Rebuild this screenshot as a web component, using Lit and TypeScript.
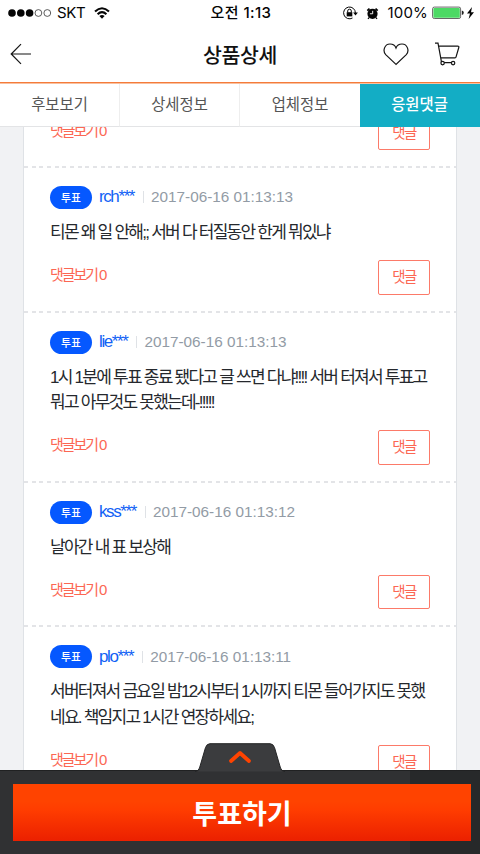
import { LitElement, html, css, svg } from "lit";
import { customElement, property } from "lit/decorators.js";
import { classMap } from "lit/directives/class-map.js";

interface Comment {
  user: string;
  date: string;
  lines: string[];
}

const comments: Comment[] = [
  { user: "rch***", date: "2017-06-16 01:13:13", lines: ["티몬 왜 일 안해;; 서버 다 터질동안 한게 뭐있냐"] },
  {
    user: "lie***",
    date: "2017-06-16 01:13:13",
    lines: ["1시 1분에 투표 종료 됐다고 글 쓰면 다냐!!!! 서버 터져서 투표고", "뭐고 아무것도 못했는데-!!!!!"],
  },
  { user: "kss***", date: "2017-06-16 01:13:12", lines: ["날아간 내 표 보상해"] },
  {
    user: "plo***",
    date: "2017-06-16 01:13:11",
    lines: ["서버터져서 금요일 밤12시부터 1시까지 티몬 들어가지도 못했", "네요. 책임지고 1시간 연장하세요;"],
  },
];

@customElement("status-bar")
class StatusBar extends LitElement {
  static styles = css`
    :host {
      display: grid;
      grid-template-columns: 1fr auto 1fr;
      align-items: center;
      height: 26px;
      padding: 0 6px 0 8px;
      font: 15.5px/26px Inter, "Noto Sans CJK KR", sans-serif;
      color: #050505;
    }
    .side { display: flex; align-items: center; }
    .right { justify-content: flex-end; }
    .carrier { margin: 0 8px 0 5px; font-size: 15px; letter-spacing: -0.3px; }
    .time { font-weight: 500; font-size: 15px; letter-spacing: 0.4px; }
    .pct { margin: 0 4px 0 8px; letter-spacing: 0.2px; font-size: 15px; }
    svg { display: block; flex: none; }
    .alarm { margin-left: 8px; }
    .bolt { margin-left: 3px; }
  `;
  render() {
    return html`
      <div class="side">
        <svg width="44" height="10" viewBox="0 0 44 10">
          ${[4, 12.8, 21.6].map((x) => svg`<circle cx=${x} cy="5" r="3.8" fill="#050505" />`)}
          ${[30.4, 39.3].map((x) => svg`<circle cx=${x} cy="5" r="3.4" fill="none" stroke="#333" stroke-width=".8" />`)}
        </svg>
        <span class="carrier">SKT</span>
        <svg width="16" height="12" viewBox="0 0 16 12">
          <g fill="none" stroke="#050505" stroke-width="2.1">
            <path d="M1 4.5Q8-2 15 4.5" />
            <path d="M3.6 7.3Q8 3.1 12.4 7.3" />
          </g>
          <path d="M5.4 9.1Q8 6.8 10.6 9.1L8 11.8Z" fill="#050505" />
        </svg>
      </div>
      <span class="time">오전 1:13</span>
      <div class="side right">
        <svg width="15" height="14" viewBox="0 0 15 14">
          <path d="M12.4 7A5.9 5.9 0 1 0 9.5 12" fill="none" stroke="#050505" stroke-width="1" />
          <path d="M10.1 6.5h4.8l-2.4 3Z" fill="#050505" />
          <rect x="3.7" y="6.2" width="5.6" height="4.2" fill="#050505" />
          <path d="M4.7 6.5V5a1.8 1.8 0 0 1 3.6 0v1.5" fill="none" stroke="#050505" stroke-width="1" />
        </svg>
        <svg class="alarm" width="13" height="13" viewBox="0 0 14 13">
          <circle cx="7" cy="6.8" r="5.5" fill="#050505" />
          <path d="M1.4 3.4L3.8 1.2M12.6 3.4L10.2 1.2" stroke="#050505" stroke-width="1.9" />
          <path d="M3.2 11l-1 1.4M10.8 11l1 1.4" stroke="#050505" stroke-width="1.4" />
          <path d="M4.2 6.8H7.2V3.6" fill="none" stroke="#fff" stroke-width="1" />
        </svg>
        <span class="pct">100%</span>
        <svg width="32" height="14" viewBox="0 0 32 14">
          <rect x=".6" y="1.1" width="28" height="11.4" rx="1.7" fill="#fff" stroke="#555" stroke-width=".9" />
          <rect x="1.4" y="1.9" width="26.4" height="9.8" rx=".8" fill="#4cd964" />
          <path d="M29.8 4.6q2 .3 2 2.2t-2 2.2Z" fill="#222" />
        </svg>
        <svg class="bolt" width="7" height="12" viewBox="0 0 7 12">
          <path d="M5 0L0 6.6H3L1.6 12L7 5.2H4Z" fill="#050505" />
        </svg>
      </div>
    `;
  }
}

@customElement("title-bar")
class TitleBar extends LitElement {
  static styles = css`
    :host {
      display: grid;
      grid-template-columns: 1fr auto 1fr;
      align-items: center;
      height: 56px;
      padding: 0 20px 0 10px;
      border-bottom: 1px solid #f47b3a;
      box-shadow: 0 1px 0 #f9c09f;
      position: relative;
    }
    h1 {
      margin: 0 0 0 10px;
      font: 500 20.5px/30px "Noto Sans CJK KR", sans-serif;
      letter-spacing: -0.4px;
      color: #111;
    }
    .actions { display: flex; justify-content: flex-end; gap: 26px; align-items: center; }
    svg { display: block; fill: none; stroke: #151515; stroke-width: 1.2; }
  `;
  render() {
    return html`
      <svg width="22" height="22" viewBox="0 0 22 22">
        <path d="M21 11H1.2M11 1.2L1.2 11L11 20.8" />
      </svg>
      <h1>상품상세</h1>
      <div class="actions">
        <svg width="26" height="24" viewBox="0 0 26 24">
          <path d="M13 22.4L2.7 12.6C-.7 8.8 1.6 2 7 2C10 2 12.2 3.7 13 6C13.8 3.7 16 2 19 2C24.4 2 26.7 8.8 23.3 12.6Z" />
        </svg>
        <svg width="25" height="24" viewBox="0 0 25 24">
          <path d="M0 1.1H3L6.6 20.6H18M3.7 4.1H22.6Q24.2 4.1 23.8 5.5L21 15.1Q20.8 15.8 20 15.8H5.8" />
          <circle cx="7.6" cy="21.1" r="1.7" fill="#fff" />
          <circle cx="18.1" cy="21.1" r="1.7" fill="#fff" />
        </svg>
      </div>
    `;
  }
}

@customElement("tab-strip")
class TabStrip extends LitElement {
  static styles = css`
    :host { display: grid; grid-template-columns: repeat(4, 1fr); height: 44px; }
    .tab {
      box-sizing: border-box;
      border-right: 1px solid #eee;
      border-bottom: 1px solid #e3e4e6;
      text-align: center;
      font: 15.4px/41px "Noto Sans CJK KR", sans-serif;
      color: #555;
      background: #fff;
    }
    .near { border-right: 0; }
    .active { background: #13adc5; color: #fff; border-color: #13adc5; font-weight: 500; }
  `;
  render() {
    return ["후보보기", "상세정보", "업체정보", "응원댓글"].map(
      (t, i) => html`<div class=${classMap({ tab: true, near: i === 2, active: i === 3 })}>${t}</div>`,
    );
  }
}

@customElement("comment-item")
class CommentItem extends LitElement {
  @property({ attribute: false }) comment?: Comment;
  static styles = css`
    :host {
      display: block;
      padding: 18px 26px 18px;
      background: repeating-linear-gradient(90deg, #e3e4e7 0 4px, transparent 4px 7.68px) left bottom / 100% 2px no-repeat;
      font-family: "Liberation Sans", "Noto Sans CJK KR", sans-serif;
    }
    .head { display: flex; align-items: center; height: 23px; margin-bottom: 11px; }
    .badge {
      width: 42px;
      height: 23px;
      border-radius: 12px;
      background: #0558ff;
      color: #fff;
      text-align: center;
      font: 500 10.8px/22px "Noto Sans CJK KR", sans-serif;
    }
    .user { margin-left: 7px; font-size: 17px; letter-spacing: -1.4px; color: #1262f5; }
    .date {
      display: flex;
      align-items: center;
      margin-left: 9px;
      font-size: 15.3px;
      color: #929ba5;
      white-space: nowrap;
    }
    .date::before { content: ""; width: 1px; height: 12px; margin-right: 7px; background: #dfe2e6; }
    .text { font-size: 17px; line-height: 25.6px; letter-spacing: -1.75px; color: #25282d; white-space: nowrap; }
    .line { height: 25.6px; }
    .foot { display: flex; justify-content: space-between; align-items: flex-start; height: 34.4px; margin-top: 14.6px; }
    .replies { font-size: 15px; line-height: 29.6px; letter-spacing: -2.05px; color: #fc6753; }
    .reply {
      box-sizing: border-box;
      width: 52px;
      height: 34.4px;
      border: 1px solid #fc7a69;
      border-radius: 2px;
      background: #fff;
      color: #fc6753;
      text-align: center;
      font-size: 14.5px;
      line-height: 33px;
      letter-spacing: -1.5px;
    }
  `;
  render() {
    const c = this.comment;
    return html`
      ${c
        ? html`<div class="head">
              <span class="badge">투표</span><span class="user">${c.user}</span><span class="date">${c.date}</span>
            </div>
            <div class="text">${c.lines.map((l) => html`<div class="line">${l}</div>`)}</div>`
        : null}
      <div class="foot"><span class="replies">댓글보기 0</span><span class="reply">댓글</span></div>
    `;
  }
}

@customElement("vote-bar")
class VoteBar extends LitElement {
  static styles = css`
    :host {
      display: block;
      position: relative;
      box-sizing: border-box;
      height: 84px;
      padding: 13.5px 9px 13px 13px;
      background: linear-gradient(90deg, #303133 410px, #27292a 410px);
      box-shadow: inset 0 1px 0 #202122;
    }
    .handle { position: absolute; left: 195px; top: -27.5px; display: block; }
    .vote {
      height: 57.5px;
      background: linear-gradient(#ff4300 0 30%, #ff3d00 45%, #eb2000);
      color: #fff;
      text-align: center;
      font: 700 27px/57px "Noto Sans CJK KR", sans-serif;
    }
  `;
  render() {
    return html`
      <svg class="handle" width="90" height="30" viewBox="0 0 90 30">
        <path
          d="M0 28.5Q3.5 28.5 4.5 25L10.5 4.5Q11.8 .7 15 .7H75Q78.2 .7 79.5 4.5L85.5 25Q86.5 28.5 90 28.5"
          fill="#3b3c3e"
          stroke="#242526"
          stroke-width="1"
        />
        <path d="M36 18L45 10L54 18" fill="none" stroke="#ff4300" stroke-width="3.8" stroke-linecap="round" stroke-linejoin="round" />
      </svg>
      <div class="vote">투표하기</div>
    `;
  }
}

@customElement("app-root")
class AppRoot extends LitElement {
  static styles = css`
    :host {
      display: flex;
      flex-direction: column;
      height: 854px;
      overflow: hidden;
      background: #fff;
    }
    .scroll { flex: 1; min-height: 0; overflow: hidden; background: #f1f2f4; padding: 0 23px; }
    .card { border: solid #dfe2e6; border-width: 0 1px; background: #fff; margin-top: -26px; }
    .first { margin-top: 0; padding-top: 0; }
  `;
  render() {
    return html`
      <status-bar></status-bar>
      <title-bar></title-bar>
      <tab-strip></tab-strip>
      <div class="scroll">
        <div class="card">
          <comment-item class="first"></comment-item>
          ${comments.map((c) => html`<comment-item .comment=${c}></comment-item>`)}
        </div>
      </div>
      <vote-bar></vote-bar>
    `;
  }
}
